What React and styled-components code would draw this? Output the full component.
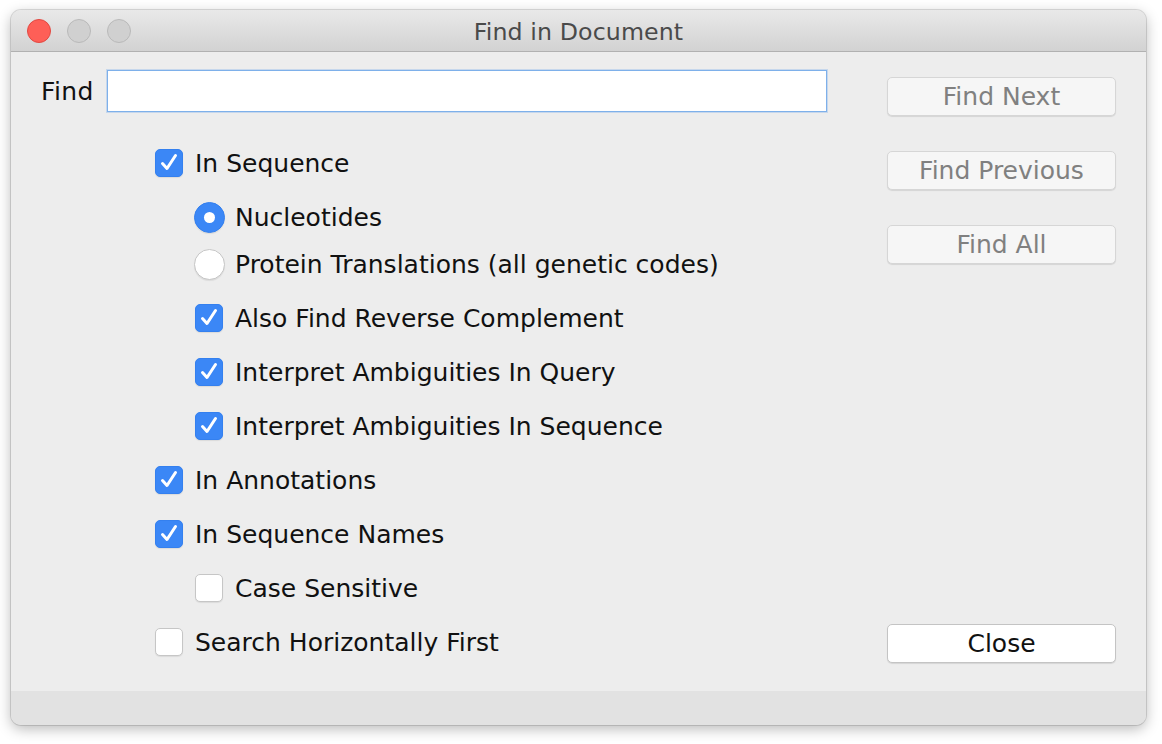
import React from "react";
import styled, { createGlobalStyle } from "styled-components";

const Global = createGlobalStyle`
  html, body { margin: 0; padding: 0; background: #ffffff; }
  body { font-family: "DejaVu Sans", "Liberation Sans", sans-serif; }
  * { box-sizing: border-box; }
`;

const Page = styled.div`
  width: 1162px;
  height: 744px;
  padding: 10px 16px 19px 11px;
`;

const Window = styled.div`
  width: 1135px;
  height: 715px;
  border-radius: 10px;
  background: #ededed;
  box-shadow: 0 0 0 1px rgba(0,0,0,0.12), 0 4px 14px rgba(0,0,0,0.28);
  display: flex;
  flex-direction: column;
  overflow: hidden;
`;

const TitleBar = styled.div`
  height: 42px;
  flex: none;
  background: linear-gradient(#e9e9e9, #d2d2d2);
  border-bottom: 1px solid #b1b1b1;
  position: relative;
  display: flex;
  align-items: center;
  justify-content: center;
  padding-top: 3px;
`;

const Lights = styled.div`
  position: absolute;
  left: 16px;
  top: 9px;
  display: flex;
  gap: 16px;
`;

const Light = styled.span`
  width: 24px;
  height: 24px;
  border-radius: 50%;
  background: ${p => (p.$red ? "#fe5f57" : "#d0d0d0")};
  border: 1px solid ${p => (p.$red ? "#e14942" : "#b9b9b9")};
`;

const Title = styled.div`
  font-size: 23.7px;
  color: #4a4a4a;
  letter-spacing: 0.1px;
`;

const Content = styled.div`
  flex: 1;
  display: grid;
  grid-template-columns: 1fr 229px;
  column-gap: 60px;
  padding: 18px 30px 28px 30px;
`;

const LeftCol = styled.div`
  display: flex;
  flex-direction: column;
`;

const FindRow = styled.div`
  display: flex;
  align-items: center;
  gap: 13px;
`;

const FindLabel = styled.label`
  font-size: 25px;
  color: #111;
  letter-spacing: 0.4px;
`;

const Input = styled.input`
  width: 720px;
  height: 42px;
  border: 1px solid #7eb0ea;
  box-shadow: 0 0 0 1px rgba(126, 176, 234, 0.35);
  background: #fff;
  outline: none;
  font-size: 24px;
  font-family: inherit;
`;

const Options = styled.div`
  display: flex;
  flex-direction: column;
  margin-top: 31px;
  padding-left: ${155 - 41}px;
`;

const Row = styled.div`
  height: 40px;
  display: flex;
  align-items: center;
  gap: 12px;
  margin-top: ${p => p.$mt ?? 14}px;
  padding-left: ${p => (p.$nested ? 40 : 0)}px;
  font-size: 25px;
  color: #111;
  &:first-child { margin-top: 0; }
`;

const Slot = styled.span`
  width: 28px;
  display: flex;
  justify-content: center;
  flex: none;
`;

const Box = styled.span`
  width: 28px;
  height: 28px;
  border-radius: 5px;
  flex: none;
  display: flex;
  align-items: center;
  justify-content: center;
  background: ${p => (p.$on ? "#3b87f6" : "#ffffff")};
  border: 1px solid ${p => (p.$on ? "#3480ef" : "#c6c6c6")};
  box-shadow: 0 1px 1px rgba(0,0,0,0.08);
`;

const Radio = styled.span`
  width: 31px;
  height: 31px;
  flex: none;
  border-radius: 50%;
  display: flex;
  align-items: center;
  justify-content: center;
  background: ${p => (p.$on ? "#3b87f6" : "#ffffff")};
  border: 1px solid ${p => (p.$on ? "#3480ef" : "#c6c6c6")};
  box-shadow: 0 1px 1px rgba(0,0,0,0.08);
  &::after {
    content: "";
    display: ${p => (p.$on ? "block" : "none")};
    width: 11px;
    height: 11px;
    border-radius: 50%;
    background: #fff;
  }
`;

const RightCol = styled.div`
  display: flex;
  flex-direction: column;
  padding-top: 7px;
`;

const Button = styled.button`
  width: 229px;
  height: 39px;
  border-radius: 5px;
  border: 1px solid ${p => (p.$disabled ? "#d6d6d6" : "#c4c4c4")};
  background: ${p => (p.$disabled ? "#f6f6f6" : "#ffffff")};
  color: ${p => (p.$disabled ? "#808080" : "#111")};
  font-family: inherit;
  font-size: 25px;
  padding: 0;
  margin-bottom: 35px;
  box-shadow: 0 1px 1px rgba(0,0,0,0.1);
  &:last-child { margin-top: auto; margin-bottom: 0; }
`;

const BottomStrip = styled.div`
  height: 34px;
  flex: none;
  background: #e2e2e2;
`;

const Check = () => (
  <svg width="26" height="26" viewBox="0 0 26 26">
    <path d="M6.5 13.5 L11 18.5 L19.5 5.5" fill="none" stroke="#fff" strokeWidth="3" strokeLinecap="round" strokeLinejoin="round" />
  </svg>
);

const CheckRow = ({ on, nested, mt, children }) => (
  <Row $nested={nested} $mt={mt}>
    <Slot>
      <Box $on={on}>{on && <Check />}</Box>
    </Slot>
    <span>{children}</span>
  </Row>
);

const RadioRow = ({ on, mt, children }) => (
  <Row $nested $mt={mt}>
    <Slot>
      <Radio $on={on} />
    </Slot>
    <span>{children}</span>
  </Row>
);

export default function App() {
  return (
    <>
      <Global />
      <Page>
        <Window>
          <TitleBar>
            <Lights>
              <Light $red />
              <Light />
              <Light />
            </Lights>
            <Title>Find in Document</Title>
          </TitleBar>
          <Content>
            <LeftCol>
              <FindRow>
                <FindLabel>Find</FindLabel>
                <Input type="text" />
              </FindRow>
              <Options>
                <CheckRow on>In Sequence</CheckRow>
                <RadioRow on>Nucleotides</RadioRow>
                <RadioRow mt={7}>Protein Translations (all genetic codes)</RadioRow>
                <CheckRow on nested>Also Find Reverse Complement</CheckRow>
                <CheckRow on nested>Interpret Ambiguities In Query</CheckRow>
                <CheckRow on nested>Interpret Ambiguities In Sequence</CheckRow>
                <CheckRow on>In Annotations</CheckRow>
                <CheckRow on>In Sequence Names</CheckRow>
                <CheckRow nested>Case Sensitive</CheckRow>
                <CheckRow>Search Horizontally First</CheckRow>
              </Options>
            </LeftCol>
            <RightCol>
              <Button $disabled>Find Next</Button>
              <Button $disabled>Find Previous</Button>
              <Button $disabled>Find All</Button>
              <Button>Close</Button>
            </RightCol>
          </Content>
          <BottomStrip />
        </Window>
      </Page>
    </>
  );
}
